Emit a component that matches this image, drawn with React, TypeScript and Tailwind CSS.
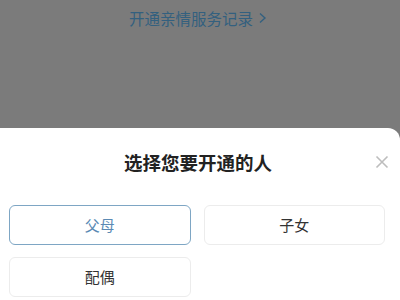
import React from 'react';

const options = [
  { label: '父母', active: true },
  { label: '子女', active: false },
  { label: '配偶', active: false },
];

export default function App() {
  return (
    <div
      className="w-[400px] h-[300px] overflow-hidden flex flex-col bg-[#7b7b7b]"
      style={{ fontFamily: '"Noto Sans CJK SC", "Noto Sans", sans-serif' }}
    >
      <div className="h-[128px] shrink-0 flex items-start justify-center pt-[7px]">
        <div className="flex items-center gap-[5px] text-[15.5px] leading-[22px] text-[#33607f] -ml-[4px]">
          <span>开通亲情服务记录</span>
          <svg width="9" height="12" viewBox="0 0 9 12" fill="none">
            <path d="M2 1.5l5 4.5-5 4.5" stroke="#33607f" strokeWidth="1.4" />
          </svg>
        </div>
      </div>
      <div className="flex-1 bg-white rounded-tr-[12px] flex flex-col">
        <div className="relative h-[68px] flex items-center justify-center">
          <span className="text-[18.5px] font-semibold text-[#222] leading-none -ml-[4px]">选择您要开通的人</span>
          <svg
            className="absolute right-[11px] top-[27px]"
            width="14"
            height="14"
            viewBox="0 0 14 14"
          >
            <path d="M1.5 1.5l11 11M12.5 1.5l-11 11" stroke="#bdbdbd" strokeWidth="1.6" />
          </svg>
        </div>
        <div className="grid grid-cols-2 gap-x-[13px] gap-y-[12px] pl-[9px] pr-[15px] pt-[9px]">
          {options.map((o) => (
            <div
              key={o.label}
              className={
                o.active
                  ? 'h-[40px] rounded-[6px] border border-[#7ea6c4] flex items-center justify-center text-[15px] text-[#5b8ab4]'
                  : 'h-[40px] rounded-[6px] border border-[#ececec] flex items-center justify-center text-[15px] text-[#333]'
              }
            >
              {o.label}
            </div>
          ))}
        </div>
      </div>
    </div>
  );
}
